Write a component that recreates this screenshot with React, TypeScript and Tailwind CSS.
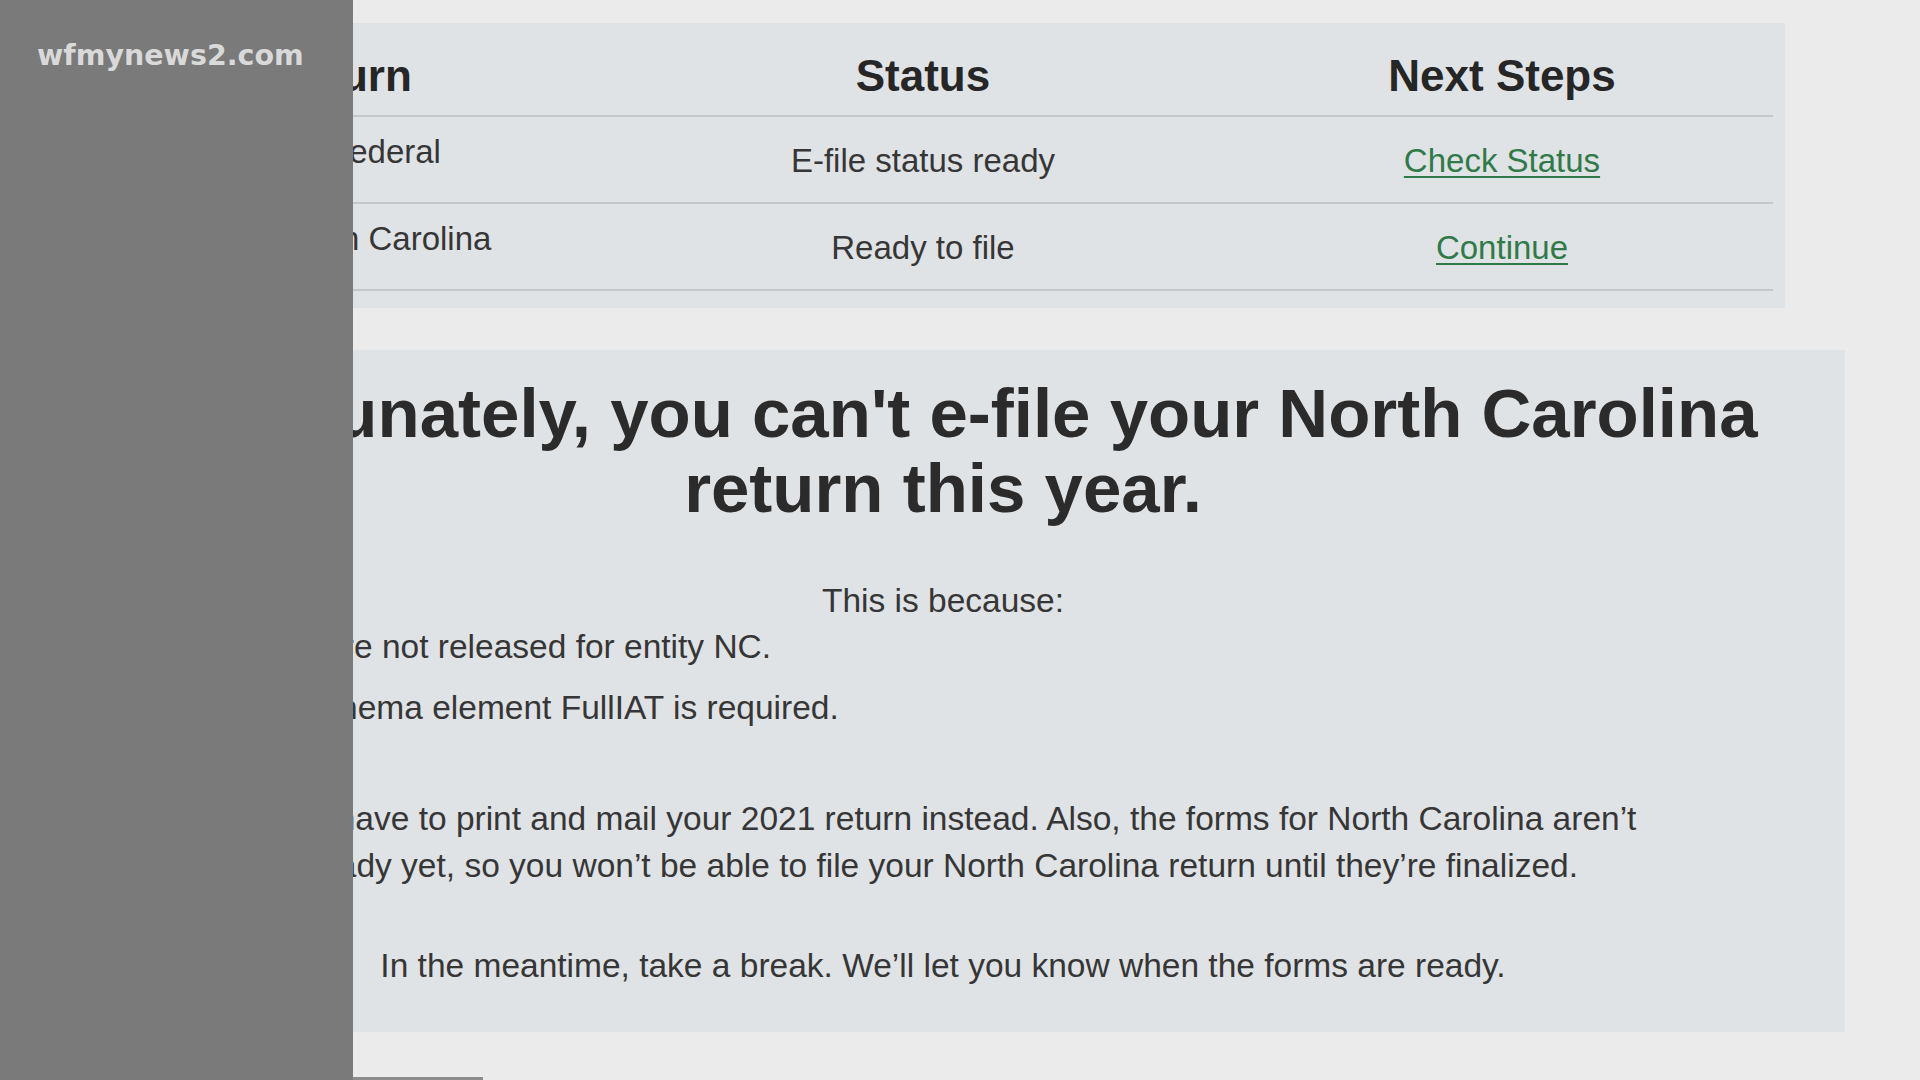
import React from "react";

const rows = [
  { name: "Federal", status: "E-file status ready", action: "Check Status" },
  { name: "North Carolina", status: "Ready to file", action: "Continue" },
];

export default function App() {
  return (
    <div className="flex h-[1080px] w-[1920px] overflow-hidden bg-[#ebebeb] font-['Liberation_Sans',Arial,sans-serif] text-[#363636]">
      {/* station sidebar */}
      <div className="h-full w-[353px] shrink-0 bg-[#7a7a7a] pl-[37px] pt-[42px]">
        <span className="font-['DejaVu_Sans',sans-serif] text-[28.5px] font-bold leading-[28px] text-[#d9d9d9]">
          wfmynews2.com
        </span>
      </div>

      {/* cropped web page */}
      <div className="h-full flex-1 overflow-hidden">
        <div className="ml-[-312px] flex h-full flex-col">
          {/* returns table */}
          <div className="mt-[23px] h-[285px] w-[1744px] bg-[#e0e3e5] pr-[12px]">
            <div className="grid h-[94px] grid-cols-[574px_616px_542px] border-b-2 border-[#c5c8ca] text-[44px] font-bold leading-[44px] text-[#262626]">
              <div className="pl-[229px] pt-[31px]">Return</div>
              <div className="pt-[31px] text-center">Status</div>
              <div className="pt-[31px] text-center">Next Steps</div>
            </div>
            {rows.map((r) => (
              <div
                key={r.name}
                className="grid h-[87px] grid-cols-[574px_616px_542px] border-b-2 border-[#c5c8ca] text-[33px] leading-[32px]"
              >
                <div className="pl-[114px] pt-[19px] text-center">{r.name}</div>
                <div className="pt-[28px] text-center">{r.status}</div>
                <div className="pt-[28px] text-center">
                  <a className="text-[#2f7a48] underline decoration-2 underline-offset-[4px]">{r.action}</a>
                </div>
              </div>
            ))}
          </div>

          {/* e-file notice */}
          <div className="mt-[42px] h-[682px] w-[1804px] bg-[#e0e3e5] pt-[26px] text-center">
            <h1 className="text-[69px] font-bold leading-[75px] text-[#2b2b2b]">
              Unfortunately, you can't e-file your North Carolina
              <br />
              return this year.
            </h1>
            <p className="mt-[52px] text-[33.5px] leading-[46px]">This is because:</p>
            <ul className="text-left text-[33.5px] leading-[46px]">
              <li className="ml-[179px]">Forms are not released for entity NC.</li>
              <li className="ml-[259px] mt-[15px]">Schema element FullIAT is required.</li>
            </ul>
            <p className="mt-[64px] text-[33.5px] leading-[47px]">
              You'll have to print and mail your 2021 return instead. Also, the forms for North Carolina aren’t
              <br />
              ready yet, so you won’t be able to file your North Carolina return until they’re finalized.
            </p>
            <p className="mt-[54px] text-[33.5px] leading-[46px]">
              In the meantime, take a break. We’ll let you know when the forms are ready.
            </p>
          </div>

          <div className="ml-[312px] mt-auto h-[3px] w-[130px] bg-[#8c8c8c]" />
        </div>
      </div>
    </div>
  );
}
